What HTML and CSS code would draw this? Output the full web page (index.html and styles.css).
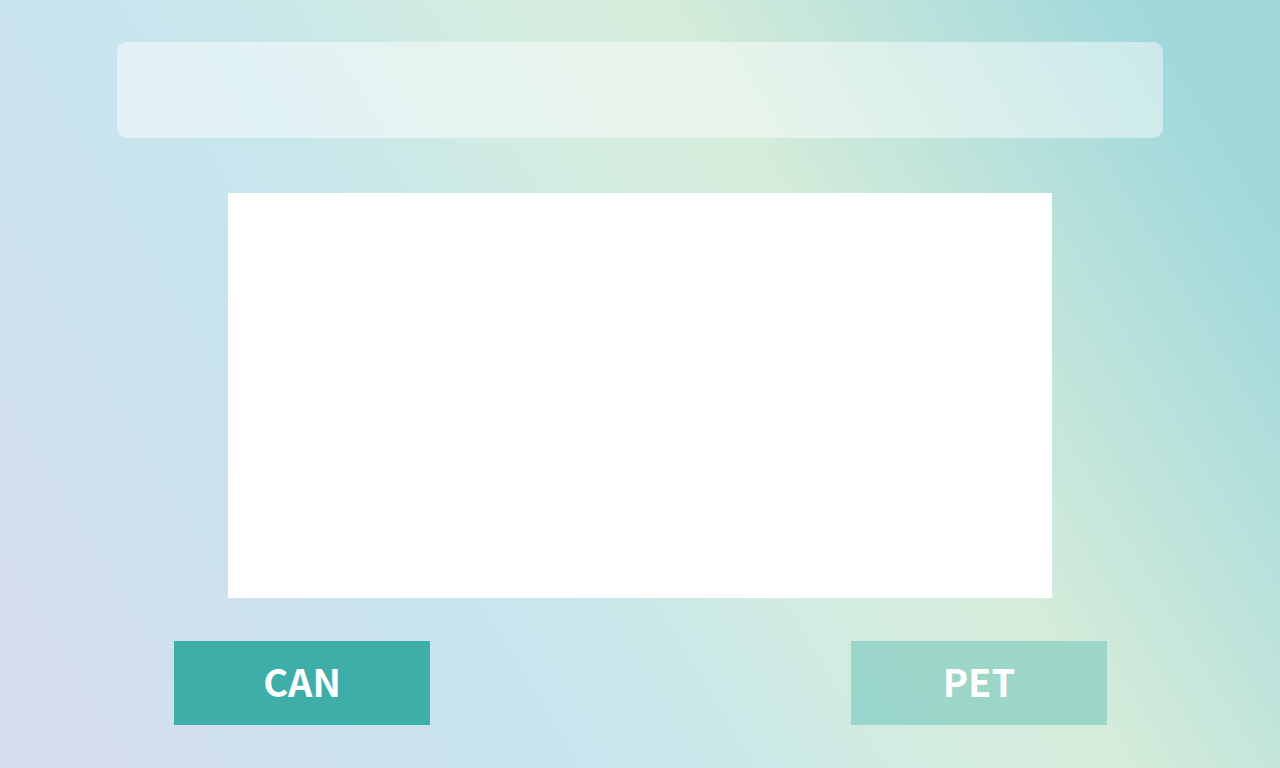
FILE: index.html
```
<!DOCTYPE html>
<html lang="en">
<head>
<meta charset="utf-8">
<title>Container type</title>
<link rel="stylesheet" href="styles.css">
</head>
<body>
<main class="screen">
  <header class="banner"></header>
  <section class="panel"></section>
  <nav class="choices">
    <button class="choice" type="button">CAN</button>
    <button class="choice choice-muted" type="button">PET</button>
  </nav>
</main>
</body>
</html>
```

FILE: styles.css
```
* { box-sizing: border-box; }

body {
  margin: 0;
  min-height: 100vh;
  font-family: "Noto Sans CJK JP", "Open Sans", sans-serif;
  background: linear-gradient(59deg, #d5dced 3%, #d2deee 10%, #cde1ee 19%, #c8e4ed 29%, #c7e7ed 37%, #d3ece1 53%, #d4ecda 65%, #a0d8dc 92%);
}

.screen {
  min-height: 100vh;
  display: flex;
  flex-direction: column;
  padding: 42px 0 43px;
}

.banner {
  height: 96px;
  margin: 0 117px 55px;
  border-radius: 10px;
  background: rgba(255, 255, 255, 0.46);
}

.panel {
  flex: 1;
  min-height: 240px;
  margin: 0 228px 43px;
  background: #fff;
}

.choices {
  display: flex;
  justify-content: space-between;
  gap: 24px;
  margin: 0 173px 0 174px;
}

.choice {
  width: 256px;
  height: 84px;
  padding: 0 0 4px;
  border: 0;
  background: #3eafa8;
  color: #fff;
  font: 700 38px/48px "Noto Sans CJK JP", sans-serif;
  cursor: pointer;
}

.choice-muted {
  background: linear-gradient(58deg, #9bd6ce, #9cd6c8 40%, #9bd6c6);
}
```
